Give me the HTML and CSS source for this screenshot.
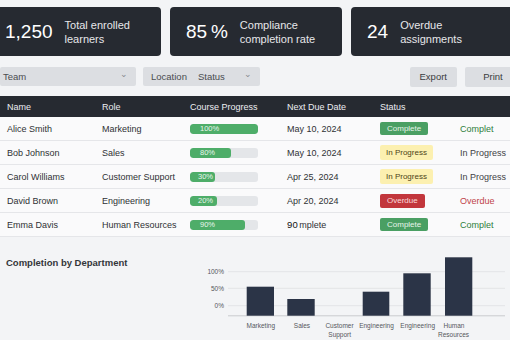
FILE: index.html
```html
<!DOCTYPE html>
<html>
  <head>
    <title>Training Compliance Dashboard</title>
    <link rel="stylesheet" href="styles.css">
  </head>
  <body>
    <div class="stats">
      <div class="stat">
        <span class="stat-num">1,250</span>
        <span class="stat-label">Total enrolled<br>learners</span>
      </div>
      <div class="stat">
        <span class="stat-num">85&#8201;%</span>
        <span class="stat-label">Compliance<br>completion rate</span>
      </div>
      <div class="stat">
        <span class="stat-num">24</span>
        <span class="stat-label">Overdue<br>assignments</span>
      </div>
    </div>

    <div class="filters">
      <div class="select select-team">
        <span>Team</span>
        <span class="chev">&#8964;</span>
      </div>
      <div class="select select-loc">
        <span>Location</span>
        <span class="sel-status">Status</span>
        <span class="chev">&#8964;</span>
      </div>
      <div class="spacer"></div>
      <button class="btn">Export</button>
      <button class="btn btn-print">Print</button>
    </div>

    <table class="learners">
      <colgroup>
        <col style="width: 95px">
        <col style="width: 88px">
        <col style="width: 97px">
        <col style="width: 93px">
        <col style="width: 80px">
        <col>
      </colgroup>
      <thead>
        <tr>
          <th>Name</th>
          <th>Role</th>
          <th>Course Progress</th>
          <th>Next Due Date</th>
          <th>Status</th>
          <th></th>
        </tr>
      </thead>
      <tbody>
        <tr>
          <td>Alice Smith</td>
          <td>Marketing</td>
          <td><div class="bar"><div class="fill" style="width: 68px">100%</div></div></td>
          <td>May 10, 2024</td>
          <td><span class="badge complete">Complete</span></td>
          <td class="st-complete">Complet</td>
        </tr>
        <tr>
          <td>Bob Johnson</td>
          <td>Sales</td>
          <td><div class="bar"><div class="fill" style="width: 41px">80%</div></div></td>
          <td>May 10, 2024</td>
          <td><span class="badge progress">In Progress</span></td>
          <td class="st-progress">In Progress</td>
        </tr>
        <tr>
          <td>Carol Williams</td>
          <td>Customer Support</td>
          <td><div class="bar"><div class="fill short" style="width: 25px">30%</div></div></td>
          <td>Apr 25, 2024</td>
          <td><span class="badge progress">In Progress</span></td>
          <td class="st-progress">In Progress</td>
        </tr>
        <tr>
          <td>David Brown</td>
          <td>Engineering</td>
          <td><div class="bar"><div class="fill short" style="width: 27px">20%</div></div></td>
          <td>Apr 20, 2024</td>
          <td><span class="badge overdue">Overdue</span></td>
          <td class="st-overdue">Overdue</td>
        </tr>
        <tr>
          <td>Emma Davis</td>
          <td>Human Resources</td>
          <td><div class="bar"><div class="fill" style="width: 55px">90%</div></div></td>
          <td><span class="odd-num">90</span>mplete</td>
          <td><span class="badge complete">Complete</span></td>
          <td class="st-complete">Complet</td>
        </tr>
      </tbody>
    </table>

    <div class="dept">
      <h2 class="dept-title">Completion by Department</h2>
      <svg class="chart" width="320" height="103" viewBox="0 0 320 103">
        <g class="grid">
          <line x1="38" y1="34.7" x2="315" y2="34.7"></line>
          <line x1="38" y1="51.3" x2="315" y2="51.3"></line>
          <line x1="38" y1="68.7" x2="315" y2="68.7"></line>
        </g>
        <g class="ylab">
          <text x="34" y="37.3">100%</text>
          <text x="34" y="53.9">50%</text>
          <text x="34" y="71.3">0%</text>
        </g>
        <line class="axis" x1="38" y1="78.8" x2="315" y2="78.8"></line>
        <g class="bars">
          <rect x="56.7" y="49.7" width="27.3" height="29"></rect>
          <rect x="97.3" y="62" width="27.4" height="16.7"></rect>
          <rect x="172.7" y="54.7" width="26.6" height="24"></rect>
          <rect x="213.3" y="36.3" width="27.4" height="42.4"></rect>
          <rect x="255" y="20.3" width="27.3" height="58.4"></rect>
        </g>
        <g class="xlab">
          <text x="70.8" y="90.5">Marketing</text>
          <text x="112" y="90.5">Sales</text>
          <text x="149.5" y="90.5">Customer</text>
          <text x="149.7" y="99.5">Support</text>
          <text x="186.5" y="90.5">Engineering</text>
          <text x="227.7" y="90.5">Engineering</text>
          <text x="264" y="90.5">Human</text>
          <text x="263.5" y="99.5">Resources</text>
        </g>
      </svg>
    </div>
  </body>
</html>
```
FILE: styles.css
```css
html, body {
  overflow: hidden;
}

body {
  margin: 0;
  background-color: #f3f4f6;
  font-family: "Liberation Sans", Arial, sans-serif;
  color: #2b2d31;
}

/* summary cards */
.stats {
  display: grid;
  grid-template-columns: 172px 172px 172px;
  gap: 9px;
  margin: 7px 0 0 -11px;
}

.stat {
  display: flex;
  align-items: center;
  height: 49px;
  padding: 0 16px;
  background-color: #262a31;
  border-radius: 4px;
  box-sizing: border-box;
}

.stat-num {
  color: #ffffff;
  font-size: 19px;
  margin-right: 12px;
  white-space: nowrap;
}

.stat-label {
  color: #e6e7ea;
  font-size: 11px;
  line-height: 14px;
}

/* filter bar */
.filters {
  display: flex;
  align-items: center;
  margin-top: 11px;
  height: 19px;
}

.select {
  display: flex;
  align-items: center;
  height: 19px;
  background-color: #dcdee2;
  border-radius: 2px;
  font-size: 9.5px;
  color: #4a4c50;
  box-sizing: border-box;
}

.select-team {
  width: 136px;
  padding: 0 8px 0 3px;
}

.select-loc {
  width: 117px;
  margin-left: 7px;
  padding: 0 8px 0 8px;
}

.sel-status {
  margin-left: 11px;
}

.chev {
  margin-left: auto;
  color: #888a8e;
  font-size: 9px;
  line-height: 1;
  position: relative;
  top: -2px;
}

.spacer {
  flex: 1;
}

.btn {
  height: 20px;
  margin-left: 7px;
  padding: 0 10px;
  border: none;
  border-radius: 2px;
  background-color: #dcdee2;
  color: #3a3c40;
  font-family: "Liberation Sans", Arial, sans-serif;
  font-size: 9.5px;
  flex: none;
}

.btn-print {
  width: 53px;
  padding: 0 0 0 3px;
  margin-right: -8px;
  margin-left: 8px;
}

/* learners table */
table.learners {
  width: 510px;
  margin-top: 10px;
  border-collapse: collapse;
  table-layout: fixed;
  font-size: 9px;
}

.learners th {
  height: 21px;
  padding: 0 0 0 7px;
  background-color: #262a31;
  color: #eceef1;
  font-weight: normal;
  text-align: left;
  white-space: nowrap;
}

.learners td {
  height: 23px;
  padding: 0 0 0 7px;
  background-color: #fafafb;
  border-bottom: 1px solid #e5e6e9;
  color: #2f3134;
  white-space: nowrap;
  overflow: hidden;
}

.odd-num {
  color: #111;
  font-size: 9.5px;
  letter-spacing: 0.3px;
  margin-right: 1px;
}

.bar {
  width: 68px;
  height: 10px;
  background-color: #e4e6e9;
  border-radius: 3px;
  overflow: hidden;
}

.fill {
  height: 10px;
  line-height: 10px;
  padding-left: 10px;
  box-sizing: border-box;
  background-color: #4ead69;
  border-radius: 3px;
  color: #eaf6ed;
  font-size: 7.5px;
  white-space: nowrap;
  overflow: hidden;
}

.fill.short {
  padding-left: 8px;
}

.badge {
  display: inline-block;
  height: 13px;
  line-height: 13px;
  padding: 0 7px;
  border-radius: 2px;
  font-size: 8px;
}

.badge.complete {
  background-color: #4a9f63;
  color: #e6f4ea;
}

.badge.progress {
  height: 15px;
  line-height: 15px;
  padding: 0 6px;
  background-color: #fcf0b0;
  color: #4d4318;
}

.badge.overdue {
  height: 14px;
  line-height: 14px;
  background-color: #c2363c;
  color: #fbdcdc;
}

.learners td.st-complete {
  color: #2e7d3c;
}

.learners td.st-progress {
  color: #3f4145;
}

.learners td.st-overdue {
  color: #c0434a;
}

/* department chart */
.dept {
  display: flex;
}

.dept-title {
  width: 190px;
  margin: 20px 0 0 0;
  padding-left: 6px;
  box-sizing: border-box;
  font-size: 9.5px;
  line-height: 12px;
  font-weight: bold;
  color: #34363a;
}

.chart {
  display: block;
  flex: none;
}

.chart .grid line {
  stroke: #e3e4e7;
  stroke-width: 1;
}

.chart .axis {
  stroke: #c9cbcf;
  stroke-width: 1;
}

.chart .bars rect {
  fill: #2b3447;
}

.chart text {
  font-family: "Liberation Sans", Arial, sans-serif;
  font-size: 6.5px;
  fill: #55575c;
}

.chart .ylab text {
  text-anchor: end;
}

.chart .xlab text {
  text-anchor: middle;
}
```
